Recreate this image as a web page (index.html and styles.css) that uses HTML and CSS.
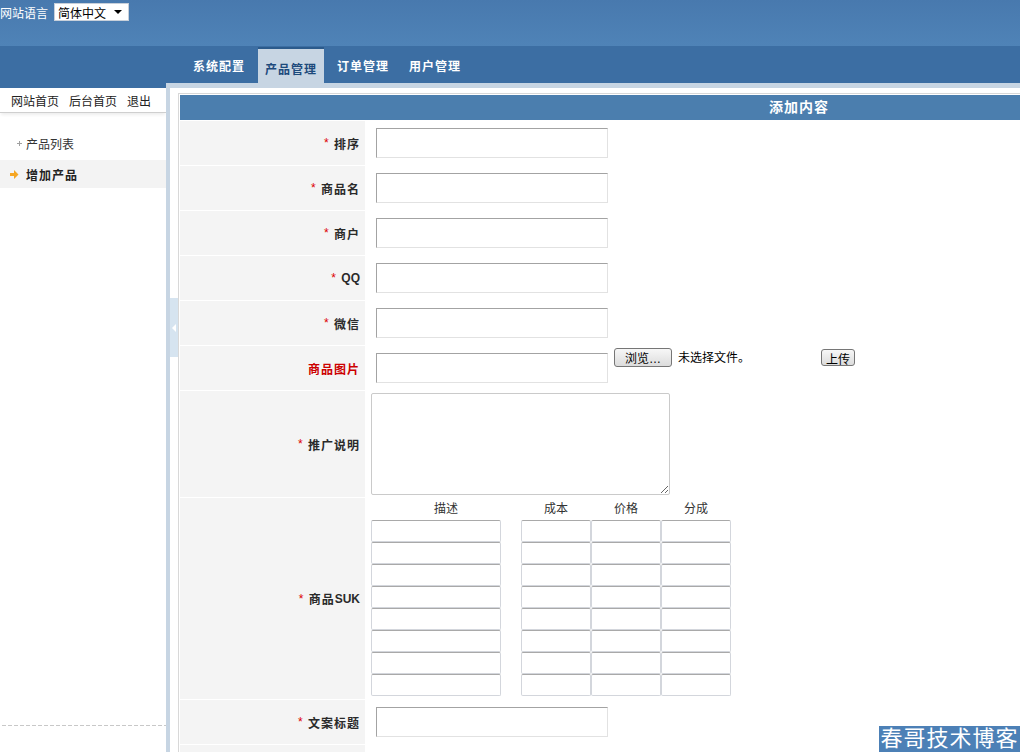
FILE: index.html
```html
<!DOCTYPE html>
<html lang="zh-CN">
<head>
<meta charset="utf-8">
<title>添加产品</title>
<link rel="stylesheet" href="styles.css">
</head>
<body>
<header class="top">
  <div class="topbar">
    <span class="lang-label">网站语言</span>
    <div class="lang-select"><span>简体中文</span><i class="caret"></i></div>
  </div>
  <nav class="nav">
    <a class="nav-item">系统配置</a>
    <a class="nav-item active">产品管理</a>
    <a class="nav-item">订单管理</a>
    <a class="nav-item">用户管理</a>
  </nav>
</header>
<div class="body">
  <aside class="sidebar">
    <div class="quick"><a>网站首页</a><a>后台首页</a><a>退出</a></div>
    <ul class="menu">
      <li class="menu-item">
        <svg class="ico-plus" width="5" height="5" viewBox="0 0 5 5"><path d="M2.5 0V5M0 2.5H5" stroke="#a0a0a0" stroke-width="1"/></svg>
        <span>产品列表</span>
      </li>
      <li class="menu-item current">
        <svg class="ico-arrow" width="9" height="9" viewBox="0 0 9 9"><polygon points="0,3 4,3 4,0 8.5,4.5 4,9 4,6 0,6" fill="#f5a623"/></svg>
        <span>增加产品</span>
      </li>
    </ul>
    <div class="side-spacer"></div>
    <div class="side-dash"></div>
  </aside>
  <div class="frame">
    <div class="toggle-col"><div class="toggle"><i class="tri"></i></div></div>
    <main class="main">
      <div class="panel">
        <div class="panel-head">添加内容</div>
        <div class="row"><div class="lbl"><em>*</em>&nbsp;排序</div><div class="val"><input class="txt" type="text"></div></div>
        <div class="row"><div class="lbl"><em>*</em>&nbsp;商品名</div><div class="val"><input class="txt" type="text"></div></div>
        <div class="row"><div class="lbl"><em>*</em>&nbsp;商户</div><div class="val"><input class="txt" type="text"></div></div>
        <div class="row"><div class="lbl"><em>*</em>&nbsp;<span class="latin">QQ</span></div><div class="val"><input class="txt" type="text"></div></div>
        <div class="row"><div class="lbl"><em>*</em>&nbsp;微信</div><div class="val"><input class="txt" type="text"></div></div>
        <div class="row"><div class="lbl red">商品图片</div>
          <div class="val val-top">
            <input class="txt txt-img" type="text">
            <button class="btn btn-browse" type="button">浏览…</button>
            <span class="file-name">未选择文件。</span>
            <button class="btn btn-upload" type="button">上传</button>
          </div>
        </div>
        <div class="row row-tall"><div class="lbl"><em>*</em>&nbsp;推广说明</div><div class="val val-narrow"><textarea class="area"></textarea></div></div>
        <div class="row row-suk"><div class="lbl"><em>*</em>&nbsp;商品<span class="latin">SUK</span></div>
          <div class="val val-narrow val-top">
            <div class="suk">
              <div class="suk-h">描述</div><div class="suk-h">成本</div><div class="suk-h">价格</div><div class="suk-h">分成</div>
              <input class="cell cell-desc"><input class="cell"><input class="cell"><input class="cell">
              <input class="cell cell-desc"><input class="cell"><input class="cell"><input class="cell">
              <input class="cell cell-desc"><input class="cell"><input class="cell"><input class="cell">
              <input class="cell cell-desc"><input class="cell"><input class="cell"><input class="cell">
              <input class="cell cell-desc"><input class="cell"><input class="cell"><input class="cell">
              <input class="cell cell-desc"><input class="cell"><input class="cell"><input class="cell">
              <input class="cell cell-desc"><input class="cell"><input class="cell"><input class="cell">
              <input class="cell cell-desc"><input class="cell"><input class="cell"><input class="cell">
            </div>
          </div>
        </div>
        <div class="row"><div class="lbl"><em>*</em>&nbsp;文案标题</div><div class="val"><input class="txt" type="text"></div></div>
        <div class="row row-tall"><div class="lbl"></div><div class="val"></div></div>
      </div>
    </main>
  </div>
</div>
<div class="watermark">春哥技术博客</div>
</body>
</html>
```
FILE: styles.css
```css
* { box-sizing: border-box; }
html, body { margin: 0; padding: 0; height: 100%; overflow: hidden; }
body {
  font-family: "Liberation Sans", "Noto Sans CJK SC", sans-serif;
  font-size: 12px;
  color: #333;
  background: #fff;
}
a { color: inherit; text-decoration: none; }
ul { list-style: none; margin: 0; padding: 0; }

.top { height: 83px; }
.topbar {
  height: 46px;
  background: linear-gradient(#4879ae, #4f83b7);
  display: flex;
  align-items: flex-start;
  padding-top: 3px;
}
.lang-label { color: #fff; line-height: 18px; padding-top: 2px; margin-right: 6px; }
.lang-select {
  width: 75px; height: 18px;
  background: #fff;
  border: 1px solid #c8d0da;
  display: flex; align-items: center; justify-content: space-between;
  padding: 0 6px 0 3px;
  color: #000;
}
.caret {
  width: 0; height: 0;
  border-left: 4px solid transparent;
  border-right: 4px solid transparent;
  border-top: 4px solid #000;
}
.nav {
  height: 37px;
  background: #3c6ea3;
  display: flex;
  padding-left: 186px;
}
.nav-item {
  margin-top: 1px;
  height: 36px;
  padding: 0 7px;
  margin-right: 6px;
  display: flex; align-items: center;
  color: #fff;
  font-weight: bold;
  letter-spacing: 1px;
}
.nav-item.active {
  background: #c7d5e3;
  border-top: 2px solid #2b5a8b;
  padding-top: 5px;
  color: #1d4a7c;
}

.body { display: flex; height: calc(100vh - 83px); }
.sidebar {
  width: 166px; flex: none;
  border-top: 5px solid #3c6ea3;
  display: flex; flex-direction: column;
  padding-bottom: 26px;
}
.quick {
  height: 25px;
  display: flex; gap: 10px;
  padding: 1px 0 0 11px;
  align-items: center;
  border-bottom: 1px solid #cfcfcf;
  box-shadow: 0 3px 3px -1px rgba(0,0,0,0.07);
  color: #222;
}
.menu { margin-top: 16px; }
.menu-item {
  height: 28px; margin-bottom: 3px;
  display: flex; align-items: center;
  color: #333;
}
.ico-plus { margin: 0 4px 0 17px; }
.ico-arrow { margin: 0 7px 0 10px; }
.menu-item.current { background: #f3f3f3; font-weight: bold; color: #222; letter-spacing: 1px; }
.side-spacer { flex: 1; }
.side-dash {
  height: 1px; margin-left: 2px;
  background: repeating-linear-gradient(to right, #c8c8c8 0 4px, transparent 4px 6px);
}

.frame {
  flex: 1; min-width: 0;
  display: flex;
  border-top: 5px solid #c7d5e3;
  border-left: 4px solid #c7d5e3;
}
.toggle-col { width: 8px; flex: none; }
.toggle {
  margin-top: 210px;
  height: 59px;
  background: #d6e4f0;
  display: flex; align-items: center; justify-content: center;
}
.tri {
  width: 0; height: 0;
  border-right: 4px solid #fff;
  border-top: 4px solid transparent;
  border-bottom: 4px solid transparent;
}
.main { flex: 1; min-width: 0; overflow: hidden; padding-top: 5px; }
.panel {
  width: 1242px;
  border: 1px solid #d8d8d8;
  padding: 1px;
}
.panel-head {
  height: 25px;
  background: #4b7eae;
  color: #fff;
  font-size: 14px;
  font-weight: bold;
  letter-spacing: 1px;
  text-align: center;
  line-height: 25px;
}
.row { display: flex; height: 44px; margin-top: 1px; }
.row-tall { height: 106px; }
.row-suk { height: 201px; }
.lbl {
  width: 185px; flex: none;
  background: #f4f4f4;
  display: flex; align-items: center; justify-content: flex-end;
  padding-right: 5px;
  font-weight: bold;
  color: #2a2a2a;
  letter-spacing: 1px;
}
.lbl .latin { letter-spacing: 0; }
.lbl em { color: #d00; font-style: normal; font-weight: normal; }
.lbl.red { color: #cc0000; }
.val { flex: 1; display: flex; align-items: center; padding-left: 11px; }
.val-narrow { padding-left: 6px; }
.val-top { align-items: flex-start; }
.txt {
  width: 232px; height: 30px;
  border: 1px solid;
  border-color: #a3a3a3 #e2e2e2 #e2e2e2 #a3a3a3;
  margin: 0; padding: 0 4px;
  font: inherit;
}
.txt-img { margin-top: 7px; }
.btn {
  font: inherit; color: #000;
  border: 1px solid #767676;
  border-radius: 3px;
  background: linear-gradient(#f7f7f7, #dcdcdc);
  padding: 0;
  margin: 0;
}
.btn-browse { width: 58px; height: 19px; margin: 2px 0 0 6px; }
.file-name { width: 149px; margin-top: 3px; padding-left: 6px; line-height: 18px; color: #000; }
.btn-upload { width: 34px; height: 17px; margin-top: 3px; }
.area {
  width: 299px; height: 102px;
  border: 1px solid #cacaca;
  border-radius: 2px;
  margin: 0;
}
.suk {
  display: grid;
  grid-template-columns: 150px 70px 70px 70px;
  grid-auto-rows: 22px;
}
.suk-h { text-align: center; line-height: 23px; color: #333; }
.cell {
  width: 70px; height: 22px; margin: 0;
  border: 1px solid #d3d6dc;
  border-top-color: #a9a9a9;
  border-radius: 2px;
  font: inherit;
}
.cell-desc { width: 130px; }

.watermark {
  position: absolute;
  right: 0; bottom: 0;
  width: 141px; height: 26px;
  background: #4c80b6;
  color: #fff;
  font-size: 22px;
  line-height: 26px;
  text-align: center;
  letter-spacing: 1px;
}
```
